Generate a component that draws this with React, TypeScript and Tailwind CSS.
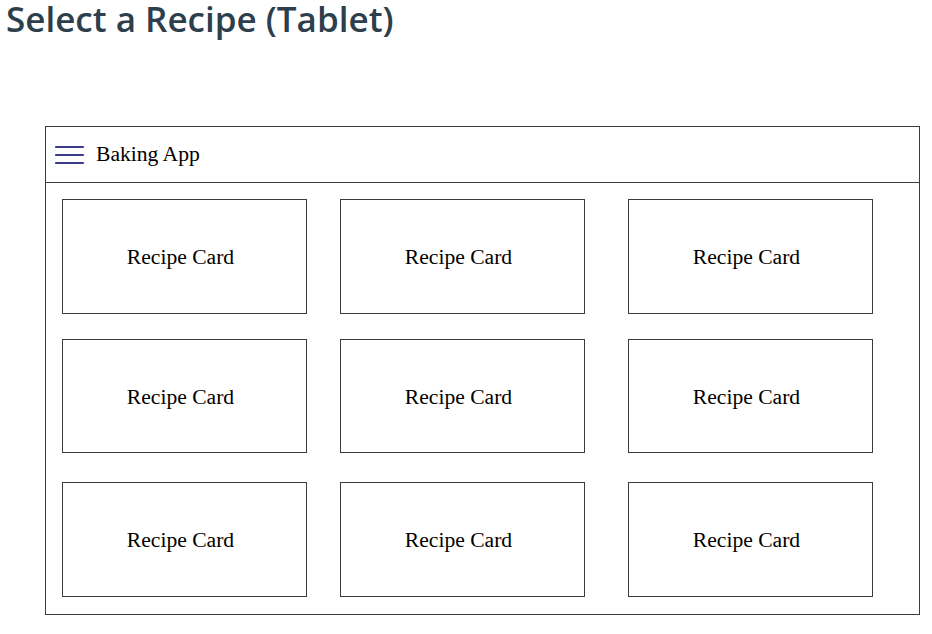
const rows = [
  { h: 'h-[115px]', mb: 'mb-[25px]' },
  { h: 'h-[114px]', mb: 'mb-[29px]' },
  { h: 'h-[115px]', mb: 'mb-0' },
];

const cols = ['mr-[33px]', 'mr-[43px]', 'mr-0'];

const RecipeCard = ({ className = '' }: { className?: string }) => (
  <div
    className={`w-[245px] flex items-center justify-center pr-[8px] pt-[2px] border border-[#3c3c3c] bg-white text-[21.6px] text-black ${className}`}
    style={{ fontFamily: '"Liberation Serif", serif' }}
  >
    Recipe Card
  </div>
);

const App = () => {
  return (
    <div className="w-[932px] h-[634px] bg-white relative overflow-hidden">
      {/* Title */}
      <h1
        className="pl-[6px] -mt-[5px] text-[35px] leading-[47px] font-semibold text-[#2d3e4c]"
        style={{ fontFamily: '"Open Sans", sans-serif' }}
      >
        Select a Recipe (Tablet)
      </h1>

      {/* Tablet frame */}
      <div className="ml-[45px] mt-[84px] w-[875px] h-[489px] border border-[#3c3c3c] flex flex-col">
        {/* App bar */}
        <div className="h-[56px] border-b border-[#3c3c3c] flex items-center pl-[9px]">
          <svg width="30" height="20" viewBox="0 0 30 20" className="mr-[11px]">
            <g stroke="#3b3b8c" strokeWidth="2.2" strokeLinecap="round">
              <line x1="1" y1="2" x2="28" y2="2" />
              <line x1="1" y1="10" x2="28" y2="10" />
              <line x1="1" y1="18" x2="28" y2="18" />
            </g>
          </svg>
          <span
            className="text-[21.6px] text-black"
            style={{ fontFamily: '"Liberation Serif", serif' }}
          >
            Baking App
          </span>
        </div>

        {/* Recipe grid */}
        <div className="pl-[16px] pt-[16px]">
          {rows.map((row, r) => (
            <div key={r} className={`flex ${row.mb}`}>
              {cols.map((c, i) => (
                <RecipeCard key={i} className={`${row.h} ${c}`} />
              ))}
            </div>
          ))}
        </div>
      </div>
    </div>
  );
};

export default App;
